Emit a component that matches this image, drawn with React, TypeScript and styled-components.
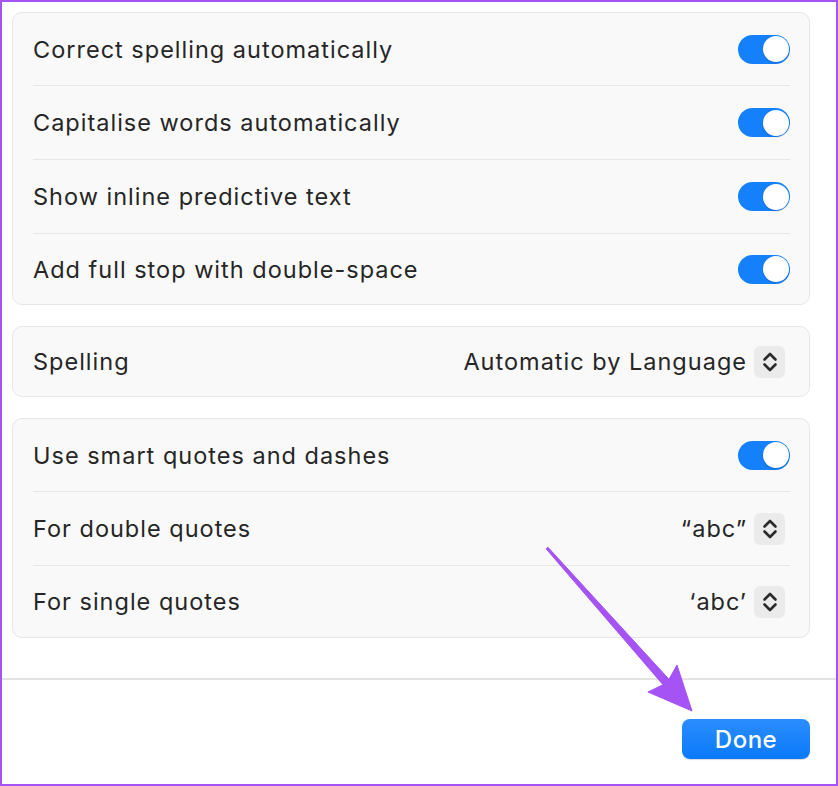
import React from "react";
import styled, { createGlobalStyle } from "styled-components";

const Global = createGlobalStyle`
  html, body { margin: 0; padding: 0; background: #ffffff; }
  * { box-sizing: border-box; }
  body { font-family: Inter, "Noto Sans", "Liberation Sans", sans-serif; -webkit-font-smoothing: antialiased; }
`;

const Frame = styled.div`
  position: relative;
  width: 838px;
  height: 786px;
  border: 2px solid #a653f6;
  background: #ffffff;
  display: flex;
  flex-direction: column;
  overflow: hidden;
`;

const Content = styled.div`
  display: flex;
  flex-direction: column;
  gap: 21px;
  padding: 10px 26px 0 10px;
`;

const Group = styled.div`
  background: #f9f9f9;
  border: 1px solid #e6e6e6;
  border-radius: 10px;
  display: flex;
  flex-direction: column;
`;

const Row = styled.div<{ $h?: number }>`
  height: ${(p) => p.$h ?? 72}px;
  display: flex;
  align-items: center;
  justify-content: space-between;
  padding: 0 19px 0 20px;
`;

const Separator = styled.div`
  height: 1px;
  margin: 0 19px 0 20px;
  background: #e6e6e6;
`;

const Label = styled.span`
  font-size: 23.5px;
  color: #262626;
  letter-spacing: 1px;
`;

const Value = styled.div`
  display: flex;
  align-items: center;
  gap: 7px;
  margin-right: 5px;
  font-size: 23.5px;
  letter-spacing: 1px;
  color: #262626;
`;

const Track = styled.div<{ $on: boolean }>`
  width: 52px;
  height: 29px;
  border-radius: 15px;
  background: ${(p) => (p.$on ? "#1580fb" : "#d9d9d9")};
  display: flex;
  align-items: center;
  justify-content: ${(p) => (p.$on ? "flex-end" : "flex-start")};
  padding: 0 1.5px;
`;

const Knob = styled.div`
  width: 26px;
  height: 26px;
  border-radius: 50%;
  background: #ffffff;
  box-shadow: 0 1px 2px rgba(0, 0, 0, 0.18);
`;

const StepperBox = styled.div`
  width: 31px;
  height: 32px;
  border-radius: 6px;
  background: #ebebeb;
  display: flex;
  align-items: center;
  justify-content: center;
`;

const Footer = styled.div`
  margin-top: 40px;
  border-top: 2px solid #e3e3e3;
  display: flex;
  justify-content: flex-end;
  padding: 39px 26px 0 0;
`;

const DoneButton = styled.button`
  width: 128px;
  height: 40px;
  border: none;
  border-radius: 8px;
  background: linear-gradient(#2b8dfd, #0a79fa);
  color: #ffffff;
  font-family: Inter, "Noto Sans", sans-serif;
  font-size: 24px;
  font-weight: 500;
  letter-spacing: 0.5px;
  box-shadow: 0 0.5px 1px rgba(0, 0, 0, 0.15);
`;

const ArrowLayer = styled.svg`
  position: absolute;
  left: -2px;
  top: -2px;
  width: 838px;
  height: 786px;
  pointer-events: none;
`;

const Toggle = ({ on }: { on: boolean }) => (
  <Track $on={on}>
    <Knob />
  </Track>
);

const Stepper = () => (
  <StepperBox>
    <svg width="18" height="24" viewBox="0 0 18 24" fill="none">
      <path d="M3.5 9.5 L9 4 L14.5 9.5" stroke="#2a2a2a" strokeWidth="2.6" strokeLinecap="round" strokeLinejoin="round" />
      <path d="M3.5 14.5 L9 20 L14.5 14.5" stroke="#2a2a2a" strokeWidth="2.6" strokeLinecap="round" strokeLinejoin="round" />
    </svg>
  </StepperBox>
);

const toggles: { label: string; h: number }[] = [
  { label: "Correct spelling automatically", h: 72 },
  { label: "Capitalise words automatically", h: 73 },
  { label: "Show inline predictive text", h: 73 },
  { label: "Add full stop with double-space", h: 70 },
];

export default function App() {
  return (
    <>
      <Global />
      <Frame>
        <Content>
          <Group>
            {toggles.map((t, i) => (
              <React.Fragment key={t.label}>
                {i > 0 && <Separator />}
                <Row $h={t.h}>
                  <Label>{t.label}</Label>
                  <Toggle on />
                </Row>
              </React.Fragment>
            ))}
          </Group>
          <Group>
            <Row $h={69}>
              <Label>Spelling</Label>
              <Value>
                Automatic by Language
                <Stepper />
              </Value>
            </Row>
          </Group>
          <Group>
            <Row $h={72}>
              <Label>Use smart quotes and dashes</Label>
              <Toggle on />
            </Row>
            <Separator />
            <Row $h={73}>
              <Label>For double quotes</Label>
              <Value>
                “abc”
                <Stepper />
              </Value>
            </Row>
            <Separator />
            <Row $h={71}>
              <Label>For single quotes</Label>
              <Value>
                ‘abc’
                <Stepper />
              </Value>
            </Row>
          </Group>
        </Content>
        <Footer>
          <DoneButton>Done</DoneButton>
        </Footer>
        <ArrowLayer viewBox="0 0 838 786">
          <polygon
            points="546.1,548.8 663,684.7 648,692 692,711 677,665 669,679.3 547.9,547.2"
            fill="#a653f6"
            stroke="#a653f6"
            strokeWidth="1"
            strokeLinejoin="round"
          />
        </ArrowLayer>
      </Frame>
    </>
  );
}
